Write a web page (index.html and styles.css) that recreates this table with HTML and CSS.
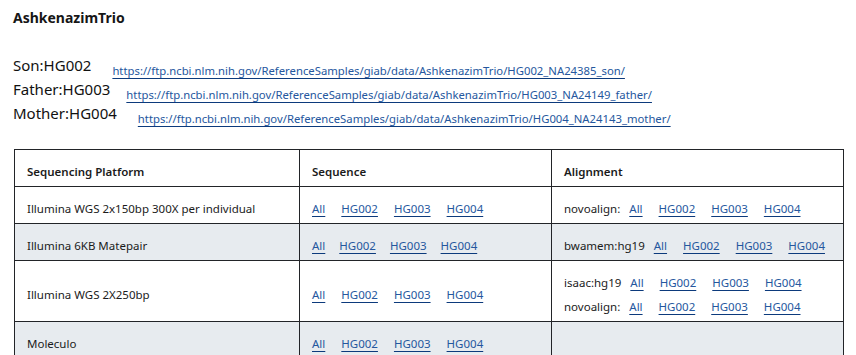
FILE: index.html
```html
<!DOCTYPE html>
<html lang="en">
<head>
<meta charset="utf-8">
<title>AshkenazimTrio</title>
<link rel="stylesheet" href="styles.css">
</head>
<body>
<div class="page">
  <h1 class="title">AshkenazimTrio</h1>
  <div class="members">
    <div class="member"><span class="label">Son:HG002</span><a class="url" href="#">https://ftp.ncbi.nlm.nih.gov/ReferenceSamples/giab/data/AshkenazimTrio/HG002_NA24385_son/</a></div>
    <div class="member"><span class="label">Father:HG003</span><a class="url near" href="#">https://ftp.ncbi.nlm.nih.gov/ReferenceSamples/giab/data/AshkenazimTrio/HG003_NA24149_father/</a></div>
    <div class="member"><span class="label">Mother:HG004</span><a class="url" href="#">https://ftp.ncbi.nlm.nih.gov/ReferenceSamples/giab/data/AshkenazimTrio/HG004_NA24143_mother/</a></div>
  </div>
  <table class="data">
    <colgroup>
      <col class="c1"><col class="c2"><col class="c3">
    </colgroup>
    <thead>
      <tr><th>Sequencing Platform</th><th>Sequence</th><th>Alignment</th></tr>
    </thead>
    <tbody>
      <tr>
        <td>Illumina WGS 2x150bp 300X per individual</td>
        <td><div class="links"><a href="#">All</a><a href="#">HG002</a><a href="#">HG003</a><a href="#">HG004</a></div></td>
        <td><div class="links"><span class="aligner">novoalign:</span><a href="#">All</a><a href="#">HG002</a><a href="#">HG003</a><a href="#">HG004</a></div></td>
      </tr>
      <tr>
        <td>Illumina 6KB Matepair</td>
        <td><div class="links tight"><a href="#">All</a><a href="#">HG002</a><a href="#">HG003</a><a href="#">HG004</a></div></td>
        <td><div class="links"><span class="aligner">bwamem:hg19</span><a href="#">All</a><a href="#">HG002</a><a href="#">HG003</a><a href="#">HG004</a></div></td>
      </tr>
      <tr>
        <td>Illumina WGS 2X250bp</td>
        <td><div class="links"><a href="#">All</a><a href="#">HG002</a><a href="#">HG003</a><a href="#">HG004</a></div></td>
        <td>
          <div class="links"><span class="aligner">isaac:hg19</span><a href="#">All</a><a href="#">HG002</a><a href="#">HG003</a><a href="#">HG004</a></div>
          <div class="links second"><span class="aligner">novoalign:</span><a href="#">All</a><a href="#">HG002</a><a href="#">HG003</a><a href="#">HG004</a></div>
        </td>
      </tr>
      <tr>
        <td>Moleculo</td>
        <td><div class="links"><a href="#">All</a><a href="#">HG002</a><a href="#">HG003</a><a href="#">HG004</a></div></td>
        <td></td>
      </tr>
    </tbody>
  </table>
</div>
</body>
</html>
```
FILE: styles.css
```css
html, body {
  margin: 0;
  padding: 0;
  background: #ffffff;
}

body {
  font-family: "Noto Sans", "Open Sans", "DejaVu Sans", sans-serif;
  color: #1b1b1b;
}

.page {
  padding: 8px 13px 0 13px;
}

.title {
  margin: 0;
  font-size: 14px;
  line-height: 20px;
  font-weight: 700;
  color: #161616;
}

.members {
  margin-top: 25px;
}

.member {
  line-height: 24px;
  height: 24px;
  white-space: nowrap;
}

.label {
  font-size: 15px;
  color: #111111;
}

.url {
  font-size: 11.3px;
  margin-left: 21px;
  vertical-align: -4px;
}

.url.near {
  margin-left: 16px;
}

a {
  color: #25579e;
  text-decoration: underline;
  text-decoration-color: #0c3a7c;
  text-underline-offset: 3px;
  text-decoration-thickness: 1px;
}

.data {
  margin-top: 24px;
  margin-left: 1px;
  width: 829px;
  table-layout: fixed;
  border-collapse: collapse;
  font-size: 11.5px;
}

.c1 { width: 285px; }
.c2 { width: 252px; }
.c3 { width: 292px; }

.data th,
.data td {
  border: 1px solid #222428;
  padding: 13px 12px 6px 12px;
  line-height: 17px;
  text-align: left;
  vertical-align: middle;
  white-space: nowrap;
  color: #1b1b1b;
}

.data th {
  font-weight: 600;
}

.data tbody tr:nth-child(even) td {
  background: #e7ebef;
}

.links {
  display: flex;
  align-items: baseline;
}

.links a + a {
  margin-left: 16px;
}

.links.tight a + a {
  margin-left: 14px;
}

.aligner {
  margin-right: 9px;
}

.links.second {
  margin-top: 7px;
}
```
